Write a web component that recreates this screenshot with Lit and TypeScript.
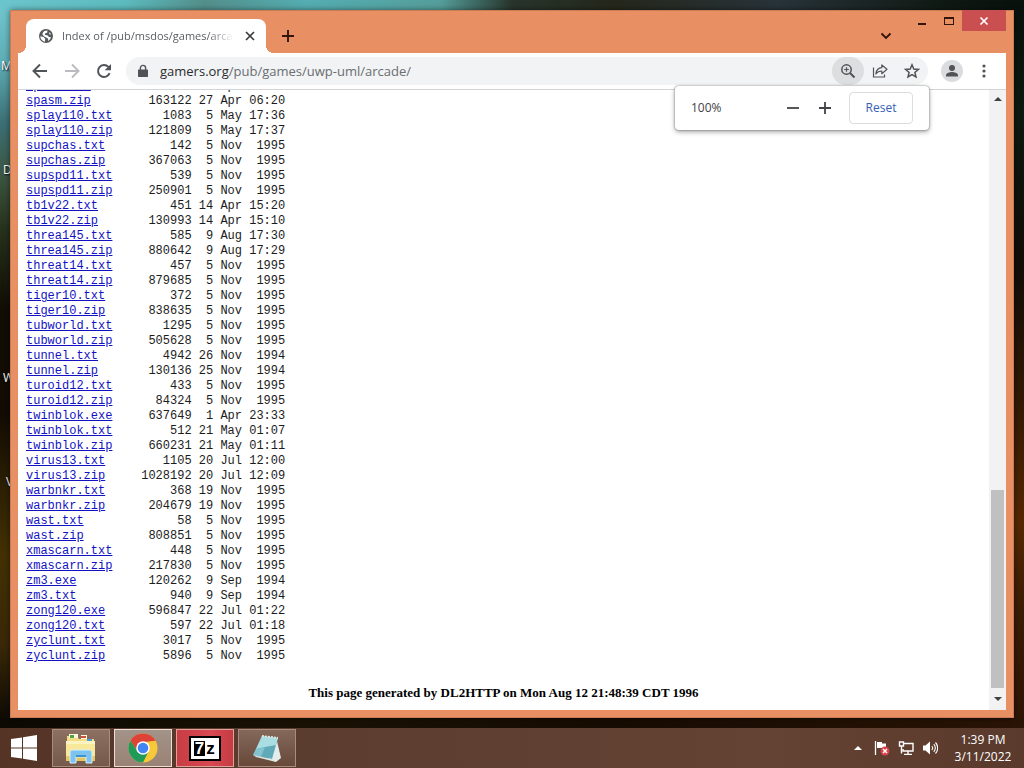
import { LitElement, html, css, svg } from "lit";
import { customElement } from "lit/decorators.js";

type Entry = [name: string, size: number, day: number, month: string, time: string];

const ENTRIES: Entry[] = [
  ["spasm.txt", 1380, 27, "Apr", "06:20"],
  ["spasm.zip", 163122, 27, "Apr", "06:20"],
  ["splay110.txt", 1083, 5, "May", "17:36"],
  ["splay110.zip", 121809, 5, "May", "17:37"],
  ["supchas.txt", 142, 5, "Nov", "1995"],
  ["supchas.zip", 367063, 5, "Nov", "1995"],
  ["supspd11.txt", 539, 5, "Nov", "1995"],
  ["supspd11.zip", 250901, 5, "Nov", "1995"],
  ["tb1v22.txt", 451, 14, "Apr", "15:20"],
  ["tb1v22.zip", 130993, 14, "Apr", "15:10"],
  ["threa145.txt", 585, 9, "Aug", "17:30"],
  ["threa145.zip", 880642, 9, "Aug", "17:29"],
  ["threat14.txt", 457, 5, "Nov", "1995"],
  ["threat14.zip", 879685, 5, "Nov", "1995"],
  ["tiger10.txt", 372, 5, "Nov", "1995"],
  ["tiger10.zip", 838635, 5, "Nov", "1995"],
  ["tubworld.txt", 1295, 5, "Nov", "1995"],
  ["tubworld.zip", 505628, 5, "Nov", "1995"],
  ["tunnel.txt", 4942, 26, "Nov", "1994"],
  ["tunnel.zip", 130136, 25, "Nov", "1994"],
  ["turoid12.txt", 433, 5, "Nov", "1995"],
  ["turoid12.zip", 84324, 5, "Nov", "1995"],
  ["twinblok.exe", 637649, 1, "Apr", "23:33"],
  ["twinblok.txt", 512, 21, "May", "01:07"],
  ["twinblok.zip", 660231, 21, "May", "01:11"],
  ["virus13.txt", 1105, 20, "Jul", "12:00"],
  ["virus13.zip", 1028192, 20, "Jul", "12:09"],
  ["warbnkr.txt", 368, 19, "Nov", "1995"],
  ["warbnkr.zip", 204679, 19, "Nov", "1995"],
  ["wast.txt", 58, 5, "Nov", "1995"],
  ["wast.zip", 808851, 5, "Nov", "1995"],
  ["xmascarn.txt", 448, 5, "Nov", "1995"],
  ["xmascarn.zip", 217830, 5, "Nov", "1995"],
  ["zm3.exe", 120262, 9, "Sep", "1994"],
  ["zm3.txt", 940, 9, "Sep", "1994"],
  ["zong120.exe", 596847, 22, "Jul", "01:22"],
  ["zong120.txt", 597, 22, "Jul", "01:18"],
  ["zyclunt.txt", 3017, 5, "Nov", "1995"],
  ["zyclunt.zip", 5896, 5, "Nov", "1995"],
];

const icon = (size: number, box: string, body: unknown) =>
  html`<svg width=${size} height=${size} viewBox=${box} aria-hidden="true">${body}</svg>`;

const buttonReset = css`
  button {
    appearance: none;
    border: 0;
    margin: 0;
    padding: 0;
    background: none;
    color: inherit;
    font: inherit;
    display: flex;
    align-items: center;
    justify-content: center;
  }
  svg {
    display: block;
    flex: none;
  }
`;

@customElement("tab-strip")
class TabStrip extends LitElement {
  static styles = [
    buttonReset,
    css`
      :host {
        display: flex;
        align-items: flex-end;
        height: 43px;
        padding-left: 8px;
        font: 11px/16px "Open Sans", "Noto Sans", sans-serif;
      }
      .tab {
        position: relative;
        display: flex;
        align-items: center;
        box-sizing: border-box;
        width: 240px;
        height: 34px;
        padding: 0 8px 0 12px;
        background: #fff;
        border-radius: 8px 8px 0 0;
        color: #5b5e62;
      }
      .tab::before,
      .tab::after {
        content: "";
        position: absolute;
        bottom: 0;
        width: 8px;
        height: 8px;
      }
      .tab::before {
        right: 100%;
        background: radial-gradient(circle at 0 0, transparent 8px, #fff 8px);
      }
      .tab::after {
        left: 100%;
        background: radial-gradient(circle at 100% 0, transparent 8px, #fff 8px);
      }
      .title {
        flex: 1;
        margin: 0 8px;
        overflow: hidden;
        white-space: nowrap;
        mask-image: linear-gradient(to right, #000 85%, transparent);
      }
      .close {
        width: 16px;
        height: 16px;
        color: #3c3c3c;
      }
      .new {
        width: 28px;
        height: 34px;
        margin-left: 8px;
        color: #34150b;
      }
      .controls {
        display: flex;
        align-self: flex-start;
        margin-left: auto;
        color: #34150b;
      }
      .search {
        width: 28px;
        height: 28px;
        margin-top: 12px;
        margin-right: 8px;
      }
      .control {
        width: 27px;
        height: 21px;
      }
      .exit {
        width: 44px;
        background: #c94f50;
        color: #fff;
      }
    `,
  ];

  render() {
    return html`
      <div class="tab">
        ${icon(16, "0 0 16 16", svg`<circle cx="8" cy="8" r="7" fill="#55585c"/>
          <path fill="#fff" d="M2.300 8.200 5.600 9.100 7.200 10.800 7 13.700C4.200 13.200 2.300 10.900 2.300 8.200zM6.300 3.100 9.500 2.500 9.200 4.700 7.300 5.300 6.700 6.700 9.700 7.400 11 9.100 12.900 9.300C12.500 10.900 11.500 12.300 10 13L10.200 10.700 8.700 9.700 5.800 8.200 4.400 6.300C4.600 5 5.200 3.900 6.300 3.100zM11.200 4 13.300 6.600 11.300 6.300z"/>`)}
        <span class="title">Index of /pub/msdos/games/arcade/</span>
        <button class="close" aria-label="Close tab">
          ${icon(16, "0 0 16 16", svg`<path d="m4 4 8 8m0-8-8 8" stroke="currentColor" stroke-width="1.700"/>`)}
        </button>
      </div>
      <button class="new" aria-label="New tab">
        ${icon(14, "0 0 14 14", svg`<path d="M7 1v12M1 7h12" stroke="currentColor" stroke-width="1.900"/>`)}
      </button>
      <div class="controls">
        <button class="search" aria-label="Search tabs">
          ${icon(12, "0 0 12 12", svg`<path d="m1.500 3.500 4.500 4.500 4.500-4.500" fill="none" stroke="currentColor" stroke-width="1.900"/>`)}
        </button>
        <button class="control" aria-label="Minimize">
          ${icon(12, "0 0 12 12", svg`<path d="M2 8h8v2H2z" fill="currentColor"/>`)}
        </button>
        <button class="control" aria-label="Maximize">
          ${icon(12, "0 0 12 12", svg`<path d="M1 2h10v8H1zm1 2v5h8V4z" fill="currentColor" fill-rule="evenodd"/>`)}
        </button>
        <button class="control exit" aria-label="Close window">
          ${icon(10, "0 0 10 10", svg`<path d="m1.500 1.500 7 7m0-7-7 7" stroke="currentColor" stroke-width="1.700"/>`)}
        </button>
      </div>
    `;
  }
}

@customElement("tool-bar")
class ToolBar extends LitElement {
  static styles = [
    buttonReset,
    css`
      :host {
        position: relative;
        z-index: 1;
        display: flex;
        align-items: center;
        height: 36px;
        padding: 0 6px;
        background: #fff;
        border-bottom: 1px solid #d3d4d7;
        color: #505357;
        font: 12px/16px "Open Sans", "Noto Sans", sans-serif;
      }
      .nav {
        width: 32px;
        height: 32px;
      }
      .nav.off {
        color: #babcbf;
      }
      .omnibox {
        flex: 1;
        display: flex;
        align-items: center;
        height: 28px;
        margin: 0 8px 0 6px;
        padding-left: 10px;
        border-radius: 14px;
        background: #f1f3f4;
        overflow: hidden;
      }
      .address {
        flex: 1;
        min-width: 0;
        margin-left: 10px;
        font: 13px/20px "Open Sans", "Noto Sans", sans-serif;
        color: #6a6d71;
      }
      .host {
        color: #2a2c2f;
      }
      .action {
        width: 32px;
        height: 28px;
        border-radius: 14px;
      }
      .action.open {
        background: #dcdedf;
      }
      .avatar {
        width: 22px;
        height: 22px;
        margin: 0 5px;
        border-radius: 50%;
        background: #dadce0;
      }
      .bubble {
        position: absolute;
        top: 33px;
        right: 77px;
        box-sizing: border-box;
        display: flex;
        align-items: center;
        width: 254px;
        height: 44px;
        padding: 0 16px;
        background: #fff;
        border-radius: 4px;
        box-shadow: 0 0 2px rgba(0, 0, 0, 0.5), 0 2px 5px rgba(0, 0, 0, 0.35);
        color: #414346;
      }
      .level {
        flex: 1;
      }
      .step {
        width: 32px;
        height: 32px;
      }
      .bubble .reset {
        box-sizing: border-box;
        width: 64px;
        height: 32px;
        margin-left: 8px;
        border: 1px solid #dadce0;
        border-radius: 4px;
        color: #3561b5;
      }
    `,
  ];

  render() {
    return html`
      <button class="nav" aria-label="Back">
        ${icon(16, "0 0 16 16", svg`<path d="M15 8H2m6-6.500L1.500 8 8 14.500" fill="none" stroke="currentColor" stroke-width="1.900"/>`)}
      </button>
      <button class="nav off" aria-label="Forward" disabled>
        ${icon(16, "0 0 16 16", svg`<path d="M1 8h13M8 1.500 14.500 8 8 14.500" fill="none" stroke="currentColor" stroke-width="1.900"/>`)}
      </button>
      <button class="nav" aria-label="Reload">
        ${icon(16, "0 0 16 16", svg`<path d="M13.600 10.200A6 6 0 1 1 12.400 3.900L14 5.500" fill="none" stroke="currentColor" stroke-width="2"/><path d="M15 1v6.300H8.700z" fill="currentColor"/>`)}
      </button>
      <div class="omnibox">
        ${icon(14, "0 0 14 14", svg`<path d="M3 5.500h8c.6 0 1 .4 1 1V12c0 .6-.4 1-1 1H3c-.6 0-1-.4-1-1V6.500c0-.6.400-1 1-1z" fill="currentColor"/><path d="M4.400 6V4a2.600 2.600 0 0 1 5.200 0v2" fill="none" stroke="currentColor" stroke-width="1.400"/>`)}
        <span class="address"><span class="host">gamers.org</span>/pub/games/uwp-uml/arcade/</span>
        <button class="action open" aria-label="Zoom">
          ${icon(16, "0 0 16 16", svg`<circle cx="6.500" cy="6.500" r="4.700" fill="none" stroke="currentColor" stroke-width="1.500"/><path d="m10 10 4.500 4.500" stroke="currentColor" stroke-width="2"/><path d="M6.500 4.200v4.600M4.200 6.500h4.600" stroke="currentColor" stroke-width="1.200"/>`)}
        </button>
        <button class="action" aria-label="Share">
          ${icon(16, "0 0 16 16", svg`<path d="M1.500 4.500v9.500h11v-2.500" fill="none" stroke="currentColor" stroke-width="1.200"/><path d="M9.800 2v2.700C6 5 4.200 7.400 3.800 11c1.600-2.200 3.200-3 6-3v2.700L15 6.300z" fill="none" stroke="currentColor" stroke-width="1.200" stroke-linejoin="round"/>`)}
        </button>
        <button class="action" aria-label="Bookmark">
          ${icon(16, "0 0 16 16", svg`<path d="m8 1.800 1.800 4.200 4.600.4-3.500 3 1.100 4.500L8 11.500l-4 2.400 1.100-4.500-3.500-3 4.600-.4z" fill="none" stroke="currentColor" stroke-width="1.500"/>`)}
        </button>
      </div>
      <button class="avatar" aria-label="Profile">
        ${icon(16, "0 0 16 16", svg`<circle cx="8" cy="5" r="3" fill="currentColor"/><path d="M2 13.500v-1.300c0-2 3.800-3.200 6-3.200s6 1.200 6 3.200v1.300z" fill="currentColor"/>`)}
      </button>
      <button class="nav" aria-label="Menu">
        ${icon(16, "0 0 16 16", svg`<circle cx="8" cy="3" r="1.600" fill="currentColor"/><circle cx="8" cy="8" r="1.600" fill="currentColor"/><circle cx="8" cy="13" r="1.600" fill="currentColor"/>`)}
      </button>
      <div class="bubble">
        <span class="level">100%</span>
        <button class="step" aria-label="Zoom out">
          ${icon(14, "0 0 14 14", svg`<path d="M1 7h12" stroke="currentColor" stroke-width="1.800"/>`)}
        </button>
        <button class="step" aria-label="Zoom in">
          ${icon(14, "0 0 14 14", svg`<path d="M1 7h12M7 1v12" stroke="currentColor" stroke-width="1.800"/>`)}
        </button>
        <button class="reset">Reset</button>
      </div>
    `;
  }
}

@customElement("file-index")
class FileIndex extends LitElement {
  static styles = css`
    :host {
      flex: 1;
      min-height: 0;
      display: flex;
      background: #fff;
    }
    .page {
      flex: 1;
      min-width: 0;
      display: flex;
      flex-direction: column;
      justify-content: flex-end;
      padding: 0 8px 9px;
      overflow: hidden;
    }
    .listing {
      align-self: flex-start;
      flex: none;
      border-collapse: collapse;
      font: 12px/15px "Liberation Mono", monospace;
      color: #1c1c1c;
    }
    td {
      padding: 0;
      height: 15px;
      text-align: right;
      white-space: nowrap;
    }
    td.name {
      width: 14ch;
      text-align: left;
    }
    td.size {
      width: 9ch;
    }
    td.day {
      width: 3ch;
    }
    td.month {
      width: 4ch;
    }
    td.time {
      width: 6ch;
    }
    .name a {
      color: #1212c4;
    }
    .credit {
      flex: none;
      margin: 21px 0 0;
      text-align: center;
      font: bold 13px/16px "Liberation Serif", serif;
      color: #000;
    }
    .scrollbar {
      display: grid;
      grid-template-rows: 17px 383fr 198fr 22px;
      justify-items: center;
      align-items: center;
      width: 17px;
      background: #f2f2f3;
    }
    .thumb {
      grid-row: 3;
      width: 13px;
      height: 100%;
      background: #c0c0c1;
    }
    .arrow {
      border: 4px solid transparent;
    }
    .up {
      border-top: 0;
      border-bottom-color: #404040;
    }
    .down {
      grid-row: 4;
      border-bottom: 0;
      border-top-color: #404040;
    }
  `;

  render() {
    return html`
      <div class="page">
        <table class="listing">
          <tbody>
            ${ENTRIES.map(
              ([name, size, day, month, time]) => html`<tr>
                <td class="name"><a href="#${name}">${name}</a></td>
                <td class="size">${size}</td>
                <td class="day">${day}</td>
                <td class="month">${month}</td>
                <td class="time">${time}</td>
              </tr>`
            )}
          </tbody>
        </table>
        <p class="credit">This page generated by DL2HTTP on Mon Aug 12 21:48:39 CDT 1996</p>
      </div>
      <div class="scrollbar" aria-hidden="true">
        <span class="arrow up"></span>
        <span class="thumb"></span>
        <span class="arrow down"></span>
      </div>
    `;
  }
}

const explorerIcon = icon(32, "0 0 32 32", svg`
  <path d="M2 4h10l2 3h15v22H2z" fill="#f2dc86"/>
  <path d="M4 2h9v4H4zM16 3h6v4h-6z" fill="#fff8d8"/>
  <path d="M5 3h4v3H5z" fill="#4fa64a"/><path d="M16 4h5v2h-5z" fill="#c9553c"/><path d="M22 7h5v2h-5z" fill="#4aa3d8"/>
  <path d="M1 9h29v20H1z" fill="#f7e89a"/><path d="M1 9h29v3H1z" fill="#fbf3c0"/><path d="M1 24h29v5H1z" fill="#e6c662"/>
  <path d="M5 31V21c0-2 1-3 3-3h16c2 0 3 1 3 3v10h-6v-6H11v6z" fill="#7cc3ee" stroke="#d7effb"/>
  <path d="M11 23h10v2H11z" fill="#3d93cf"/>`);

const chromeIcon = icon(30, "0 0 30 30", svg`
  <circle cx="15" cy="15" r="14.500" fill="#f7c837"/>
  <path d="M2.440 7.750A14.500 14.500 0 0 1 27.560 7.750L15 8.500 9.370 18.250z" fill="#dd4437"/>
  <path d="M27.560 7.750H15V9z" fill="#dd4437"/>
  <path d="M2.440 7.750A14.500 14.500 0 0 0 15 29.500L20.630 18.250 9.370 18.250z" fill="#1e9a59"/>
  <circle cx="15" cy="15" r="6.800" fill="#fff"/><circle cx="15" cy="15" r="5.300" fill="#4285f4"/>`);

const notepadIcon = icon(32, "0 0 32 32", svg`
  <path d="M25 5 30 26 25 30 18 27z" fill="#e3eeec"/>
  <path d="M11 4 27 6 21 27 2 23z" fill="#5fa9b8"/>
  <path d="M11 4 27 6 25 13 14 15 5 17z" fill="#a9dde2"/>
  <path d="M5 17 14 15 10 25 2 23z" fill="#83c3cd"/>
  <path d="M2 23 21 27 25 30 5 25z" fill="#dbe7e5"/>
  <path d="M11 4 27 6" stroke="#dfe3e2" stroke-width="2" stroke-dasharray="2 1"/>`);

@customElement("task-bar")
class TaskBar extends LitElement {
  static styles = [
    buttonReset,
    css`
      :host {
        display: flex;
        align-items: center;
        height: 40px;
        background: linear-gradient(to right, #553426, #5b3d30 30%, #644234 75%, #5a3a2c);
        color: #fff;
        font: 12px/17px "Open Sans", "Noto Sans", sans-serif;
      }
      .start {
        width: 48px;
        height: 40px;
      }
      .apps {
        display: flex;
        gap: 4px;
        margin-left: 4px;
      }
      .app {
        box-sizing: border-box;
        width: 58px;
        height: 38px;
        border: 1px solid #a78d80;
        background: linear-gradient(#8c7062, #755a4b);
      }
      .app.active {
        border-color: #e9dfd8;
        background: linear-gradient(#a39388, #9a8275);
      }
      .app.alert {
        border-color: #e2a09a;
        background: linear-gradient(to right, #c83c44, #d84952 60%, #c63b43);
      }
      .app.quiet {
        background: linear-gradient(#84695b, #674839);
      }
      .seven {
        box-sizing: border-box;
        display: flex;
        width: 32px;
        height: 25px;
        padding: 3px;
        border: 2px solid #000;
        background: #fff;
        font: bold 17px/16px "Liberation Sans", sans-serif;
      }
      .seven span {
        flex: 1;
        text-align: center;
        color: #000;
      }
      .seven span:first-child {
        background: #000;
        color: #fff;
      }
      .tray {
        display: flex;
        align-items: center;
        margin-left: auto;
      }
      .item {
        width: 24px;
        height: 24px;
      }
      .clock {
        display: block;
        width: 82px;
        text-align: center;
      }
      .clock time {
        display: block;
      }
    `,
  ];

  render() {
    return html`
      <button class="start" aria-label="Start">
        ${icon(26, "0 0 26 26", svg`<path d="M0 4 11 2.500v10H0zM12 2.300 26 0v12.500H12zM0 13.500h11v10L0 22zM12 13.500h14V26l-14-2.300z" fill="#fff"/>`)}
      </button>
      <div class="apps">
        <button class="app" aria-label="File Explorer">${explorerIcon}</button>
        <button class="app active" aria-label="Chrome">${chromeIcon}</button>
        <button class="app alert" aria-label="7-Zip"><span class="seven"><span>7</span><span>z</span></span></button>
        <button class="app quiet" aria-label="Notepad">${notepadIcon}</button>
      </div>
      <div class="tray">
        <button class="item" aria-label="Show hidden icons">${icon(8, "0 0 8 8", svg`<path d="m4 2 4 4H0z" fill="#fff"/>`)}</button>
        <button class="item" aria-label="Action Center">
          ${icon(16, "0 0 16 16", svg`<path d="M1.500 1v14" stroke="#fff" stroke-width="1.300"/><path d="M3 2h5v1.500h4V9H8V8H3z" fill="#fff"/><circle cx="11" cy="11" r="4.500" fill="#d8404a"/><path d="m9 9 4 4m0-4-4 4" stroke="#fff" stroke-width="1.500"/>`)}
        </button>
        <button class="item" aria-label="Network">
          ${icon(16, "0 0 16 16", svg`<path d="M6 3.500h9v7.500H5V9M10 11v3M6 14.400h8" fill="none" stroke="#fff" stroke-width="1.400"/><path d="M1.500 2h4v4h-4zM3.500 6v7.500" fill="none" stroke="#fff" stroke-width="1.400"/>`)}
        </button>
        <button class="item" aria-label="Volume">
          ${icon(16, "0 0 16 16", svg`<path d="M1 5.500h2.500L8 1.500v13l-4.500-4H1z" fill="#fff"/><path d="M9.800 6a3 3 0 0 1 0 4M11.800 4.200a5.500 5.500 0 0 1 0 7.600M13.500 2.500a8 8 0 0 1 0 11" fill="none" stroke="#fff" stroke-width="1.100"/>`)}
        </button>
        <button class="clock"><time>1:39 PM</time><time>3/11/2022</time></button>
      </div>
    `;
  }
}

@customElement("app-root")
class AppRoot extends LitElement {
  static styles = css`
    :host {
      position: relative;
      display: flex;
      flex-direction: column;
      height: 100vh;
      overflow: hidden;
      background:
        linear-gradient(to right, #6cc5cc, #5dbcc0 12%, #538f8b 20%, #55aeb3 30%, #559e9b 43%, #28352c 50%, #25271b 60%, #28333a 76%, #101a14 92%, #08110c) top / 100% 10px no-repeat,
        linear-gradient(to right, #0d0a04, #1a1204 30%, #170c03 60%, #2a1405) bottom / 100% 50px no-repeat,
        linear-gradient(#73c8d0, #5faeb6 8%, #3c7076 16%, #3c5540 23%, #26311b 30%, #120e04 40%, #130c02 54%, #433104 72%, #3a2808 84%, #0d0a04 94%) left / 50% 100% no-repeat,
        linear-gradient(#08110c, #0c1a10 15%, #130d06 35%, #331904 52%, #552802 68%, #3b1c05 80%, #2a1105) right / 50% 100% no-repeat;
      font-family: "Open Sans", "Noto Sans", sans-serif;
    }
    .label {
      position: absolute;
      color: #fff;
      font-size: 12px;
      line-height: 16px;
      text-shadow: 1px 1px 2px #000;
    }
    .m {
      top: 58px;
      left: 1px;
    }
    .d {
      top: 162px;
      left: 3px;
    }
    .w {
      top: 370px;
      left: 3px;
    }
    .v {
      top: 474px;
      left: 6px;
    }
    .window {
      position: relative;
      flex: 1;
      min-height: 0;
      display: flex;
      flex-direction: column;
      margin: 10px;
      padding: 0 8px 8px;
      background: #e88f63;
      box-shadow: inset 0 0 0 1px #c97b54, 0 0 6px rgba(0, 0, 0, 0.5);
    }
  `;

  render() {
    return html`
      <span class="label m">M</span>
      <span class="label d">D</span>
      <span class="label w">W</span>
      <span class="label v">V</span>
      <main class="window">
        <tab-strip></tab-strip>
        <tool-bar></tool-bar>
        <file-index></file-index>
      </main>
      <task-bar></task-bar>
    `;
  }
}
